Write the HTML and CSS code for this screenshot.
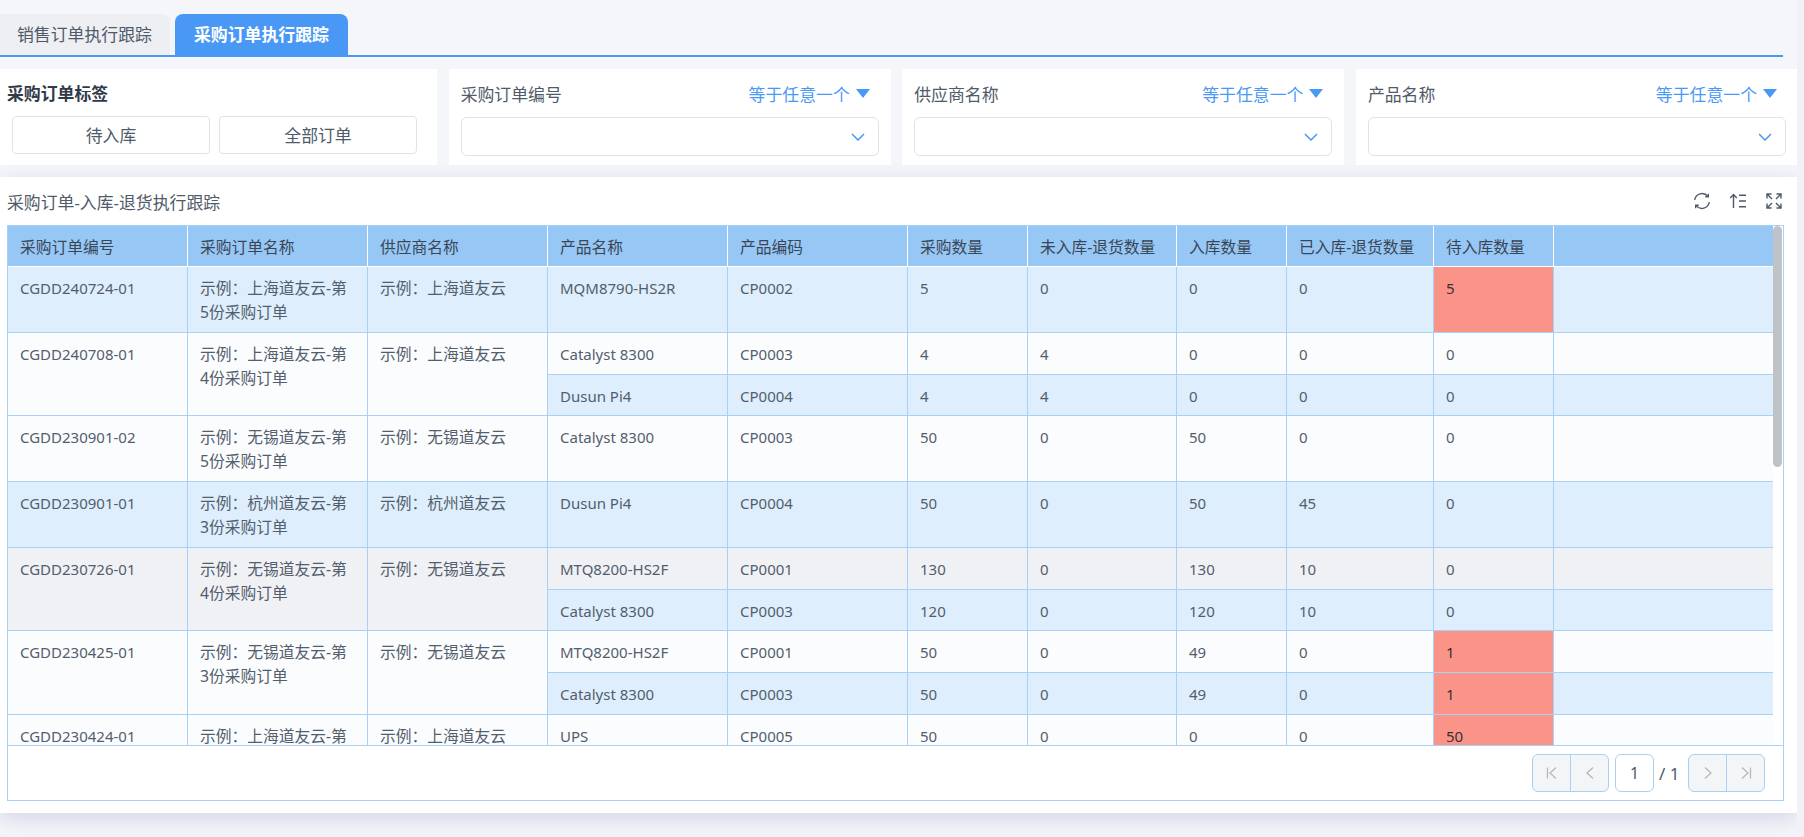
FILE: index.html
```html
<!DOCTYPE html>
<html lang="zh">
<head>
<meta charset="utf-8">
<title>采购订单执行跟踪</title>
<link rel="stylesheet" href="styles.css">
</head>
<body>
<div class="app">
  <div class="tabs">
    <div class="tab">销售订单执行跟踪</div>
    <div class="tab tab-active">采购订单执行跟踪</div>
  </div>

  <div class="filters">
    <div class="card">
      <div class="card-title">采购订单标签</div>
      <div class="tag-buttons">
        <div class="tag-button">待入库</div>
        <div class="tag-button">全部订单</div>
      </div>
    </div>
    <div class="card">
      <div class="card-head"><span>采购订单编号</span><span class="op">等于任意一个<svg class="caret" viewBox="0 0 14 9"><path d="M0 0h14L7 9z"/></svg></span></div>
      <div class="select"><svg class="chev" viewBox="0 0 14 8"><path d="M1 1l6 6 6-6"/></svg></div>
    </div>
    <div class="card">
      <div class="card-head"><span>供应商名称</span><span class="op">等于任意一个<svg class="caret" viewBox="0 0 14 9"><path d="M0 0h14L7 9z"/></svg></span></div>
      <div class="select"><svg class="chev" viewBox="0 0 14 8"><path d="M1 1l6 6 6-6"/></svg></div>
    </div>
    <div class="card">
      <div class="card-head"><span>产品名称</span><span class="op">等于任意一个<svg class="caret" viewBox="0 0 14 9"><path d="M0 0h14L7 9z"/></svg></span></div>
      <div class="select"><svg class="chev" viewBox="0 0 14 8"><path d="M1 1l6 6 6-6"/></svg></div>
    </div>
  </div>

  <div class="panel">
    <div class="panel-head">
      <div class="panel-title">采购订单-入库-退货执行跟踪</div>
      <div class="tools">
        <svg class="tool" viewBox="0 0 18 18"><path d="M1.700 8A7.400 7.400 0 0 1 14.800 4.400M16.300 10A7.400 7.400 0 0 1 3.200 13.600"/><path d="M15.300 1.800v3h-3M2.700 16.200v-3h3"/></svg>
        <svg class="tool" viewBox="0 0 18 18"><path d="M4.500 16V2.600M1.200 6l3.300-3.400L7.800 6M10 3.200h7M10 9h7M10 14.800h7"/></svg>
        <svg class="tool" viewBox="0 0 18 18"><path d="M6.500 2H2v4.500M2 2l5 5M11.500 2H16v4.500M16 2l-5 5M6.500 16H2v-4.500M2 16l5-5M11.500 16H16v-4.500M16 16l-5-5"/></svg>
      </div>
    </div>

    <div class="grid">
      <div class="grid-main">
        <div class="scroller">
          <table class="data">
            <colgroup>
              <col class="c180"><col class="c180"><col class="c180"><col class="c180"><col class="c180">
              <col class="c120"><col class="c149"><col class="c110"><col class="c147"><col class="c120"><col class="c221">
            </colgroup>
            <thead>
              <tr>
                <th>采购订单编号</th><th>采购订单名称</th><th>供应商名称</th><th>产品名称</th><th>产品编码</th>
                <th>采购数量</th><th>未入库-退货数量</th><th>入库数量</th><th>已入库-退货数量</th><th>待入库数量</th><th></th>
              </tr>
            </thead>
            <tbody>
              <tr class="blue h66">
                <td class="lat">CGDD240724-01</td><td>示例：上海道友云-第5份采购订单</td><td>示例：上海道友云</td>
                <td class="lat">MQM8790-HS2R</td><td class="lat">CP0002</td><td class="lat">5</td><td class="lat">0</td><td class="lat">0</td><td class="lat">0</td><td class="lat red">5</td><td></td>
              </tr>
              <tr class="white h42">
                <td class="lat" rowspan="2">CGDD240708-01</td><td rowspan="2">示例：上海道友云-第4份采购订单</td><td rowspan="2">示例：上海道友云</td>
                <td class="lat">Catalyst 8300</td><td class="lat">CP0003</td><td class="lat">4</td><td class="lat">4</td><td class="lat">0</td><td class="lat">0</td><td class="lat">0</td><td></td>
              </tr>
              <tr class="blue h41">
                <td class="lat">Dusun Pi4</td><td class="lat">CP0004</td><td class="lat">4</td><td class="lat">4</td><td class="lat">0</td><td class="lat">0</td><td class="lat">0</td><td></td>
              </tr>
              <tr class="white h66">
                <td class="lat">CGDD230901-02</td><td>示例：无锡道友云-第5份采购订单</td><td>示例：无锡道友云</td>
                <td class="lat">Catalyst 8300</td><td class="lat">CP0003</td><td class="lat">50</td><td class="lat">0</td><td class="lat">50</td><td class="lat">0</td><td class="lat">0</td><td></td>
              </tr>
              <tr class="blue h66">
                <td class="lat">CGDD230901-01</td><td>示例：杭州道友云-第3份采购订单</td><td>示例：杭州道友云</td>
                <td class="lat">Dusun Pi4</td><td class="lat">CP0004</td><td class="lat">50</td><td class="lat">0</td><td class="lat">50</td><td class="lat">45</td><td class="lat">0</td><td></td>
              </tr>
              <tr class="gray h42">
                <td class="lat" rowspan="2">CGDD230726-01</td><td rowspan="2">示例：无锡道友云-第4份采购订单</td><td rowspan="2">示例：无锡道友云</td>
                <td class="lat">MTQ8200-HS2F</td><td class="lat">CP0001</td><td class="lat">130</td><td class="lat">0</td><td class="lat">130</td><td class="lat">10</td><td class="lat">0</td><td></td>
              </tr>
              <tr class="blue h41">
                <td class="lat">Catalyst 8300</td><td class="lat">CP0003</td><td class="lat">120</td><td class="lat">0</td><td class="lat">120</td><td class="lat">10</td><td class="lat">0</td><td></td>
              </tr>
              <tr class="white h42">
                <td class="lat" rowspan="2">CGDD230425-01</td><td rowspan="2">示例：无锡道友云-第3份采购订单</td><td rowspan="2">示例：无锡道友云</td>
                <td class="lat">MTQ8200-HS2F</td><td class="lat">CP0001</td><td class="lat">50</td><td class="lat">0</td><td class="lat">49</td><td class="lat">0</td><td class="lat red">1</td><td></td>
              </tr>
              <tr class="blue h42">
                <td class="lat">Catalyst 8300</td><td class="lat">CP0003</td><td class="lat">50</td><td class="lat">0</td><td class="lat">49</td><td class="lat">0</td><td class="lat red">1</td><td></td>
              </tr>
              <tr class="white h66">
                <td class="lat">CGDD230424-01</td><td>示例：上海道友云-第2份采购订单</td><td>示例：上海道友云</td>
                <td class="lat">UPS</td><td class="lat">CP0005</td><td class="lat">50</td><td class="lat">0</td><td class="lat">0</td><td class="lat">0</td><td class="lat red">50</td><td></td>
              </tr>
            </tbody>
          </table>
        </div>
        <div class="scrollbar"><div class="thumb"></div></div>
      </div>
      <div class="pager">
        <div class="pg-group">
          <div class="pg-btn pg-first"><svg class="pg-icon" viewBox="0 0 16 16"><path d="M3.500 2.500v11M12 2.500L6 8l6 5.500"/></svg></div>
          <div class="pg-btn"><svg class="pg-icon" viewBox="0 0 16 16"><path d="M11 2.500L5 8l6 5.500"/></svg></div>
        </div>
        <div class="pg-input">1</div>
        <div class="pg-total">/ 1</div>
        <div class="pg-group">
          <div class="pg-btn pg-first"><svg class="pg-icon" viewBox="0 0 16 16"><path d="M5 2.500L11 8l-6 5.500"/></svg></div>
          <div class="pg-btn"><svg class="pg-icon" viewBox="0 0 16 16"><path d="M4 2.500L10 8l-6 5.500M12.500 2.500v11"/></svg></div>
        </div>
      </div>
    </div>
  </div>
</div>
</body>
</html>
```

FILE: styles.css
```css
* { box-sizing: border-box; }

html, body {
  margin: 0;
  height: 100%;
  overflow: hidden;
}

body {
  background: #f1f2f8;
  color: #4a5565;
  font-family: "Noto Sans", "Noto Sans CJK SC", sans-serif;
  font-size: 15.75px;
}

.app {
  width: 1797px;
  height: 834px;
  padding-top: 14px;
  background: #f4f6fa;
  overflow: hidden;
}

/* Tabs */
.tabs {
  display: flex;
  gap: 5px;
  width: 1783px;
  height: 43px;
  border-bottom: 2px solid #4a98f5;
}

.tab {
  width: 170px;
  height: 41px;
  padding-left: 17px;
  line-height: 42px;
  font-size: 16.875px;
  color: #4f5a68;
  background: #eeeff3;
  border-radius: 0 8px 0 0;
}

.tab-active {
  width: 173px;
  padding-left: 19px;
  color: #fff;
  font-weight: 700;
  background: #4a98f5;
  border-radius: 8px 8px 0 0;
}

/* Filter cards */
.filters {
  display: flex;
  gap: 11.5px;
  width: 1803px;
  height: 96px;
  margin: 12px 0 12px -5px;
}

.card {
  flex: 1;
  min-width: 0;
  padding: 13px 12px 0;
  background: #fff;
}

.card-title {
  height: 24px;
  line-height: 24px;
  font-size: 16.875px;
  font-weight: 700;
  color: #303a48;
}

.tag-buttons {
  display: flex;
  gap: 9px;
  margin: 10px 0 0 5px;
}

.tag-button {
  width: 198px;
  height: 38px;
  line-height: 38px;
  text-align: center;
  font-size: 16.875px;
  color: #505a69;
  background: #fff;
  border: 1px solid #e0e2e6;
  border-radius: 4px;
}

.card-head {
  display: flex;
  justify-content: space-between;
  align-items: center;
  height: 24px;
  padding-bottom: 2px;
  font-size: 16.875px;
  color: #505a69;
}

.op {
  display: flex;
  align-items: center;
  gap: 6px;
  padding-right: 9px;
  color: #4a98f5;
}

.caret {
  width: 14px;
  height: 9px;
  fill: #4a98f5;
}

.select {
  display: flex;
  align-items: center;
  justify-content: flex-end;
  height: 39px;
  margin-top: 11px;
  padding-right: 13px;
  background: #fff;
  border: 1px solid #e0e2e6;
  border-radius: 6px;
}

.chev {
  width: 14px;
  height: 8px;
  fill: none;
  stroke: #4a98f5;
  stroke-width: 1.5;
}

/* Main panel */
.panel {
  height: 636px;
  padding: 0 13px 0 7px;
  background: #fff;
  box-shadow: 0 6px 20px rgba(90, 80, 150, 0.2);
}

.panel-head {
  display: flex;
  justify-content: space-between;
  align-items: center;
  height: 48px;
}

.panel-title {
  font-size: 16.875px;
  color: #505a69;
}

.tools {
  display: flex;
  gap: 18px;
  padding-right: 1px;
}

.tool {
  width: 18px;
  height: 18px;
  fill: none;
  stroke: #4f5a68;
  stroke-width: 1.4;
}

/* Table */
.grid {
  height: 576px;
  border: 1px solid #a8d1f7;
}

.grid-main {
  display: flex;
  height: 519px;
}

.scroller {
  width: 1766px;
  overflow: hidden;
}

.scrollbar {
  width: 10px;
  padding-right: 1px;
}

.thumb {
  height: 241px;
  background: #bfc2c7;
  border-radius: 5px;
}

.data {
  width: 1766px;
  table-layout: fixed;
  border-collapse: separate;
  border-spacing: 0;
}

.c180 { width: 180px; }
.c120 { width: 120px; }
.c149 { width: 149px; }
.c110 { width: 110px; }
.c147 { width: 147px; }
.c221 { width: 221px; }

th, td {
  padding: 9px 12px 0;
  vertical-align: top;
  text-align: left;
  font-weight: 400;
  line-height: 24px;
  color: #535e6d;
  border-right: 1px solid #a8d1f7;
  border-bottom: 1px solid #a8d1f7;
}

th {
  height: 41px;
  color: #3a4658;
  background: #97c8f5;
  border-color: #fff;
}

th:last-child, td:last-child { border-right: 0; }

.lat { font-size: 15px; }

.h66 { height: 66px; }
.h42 { height: 42px; }
.h41 { height: 41px; }

.white > td { background: #fbfcfe; }
.blue > td { background: #deeefc; }
.gray > td { background: #f0f1f5; }
.white > td.red, .blue > td.red { background: #fb9488; color: #3a3030; }

/* Pager */
.pager {
  display: flex;
  align-items: center;
  justify-content: flex-end;
  height: 55px;
  padding-right: 18px;
  border-top: 1px solid #a8d1f7;
}

.pg-group {
  display: flex;
  height: 38px;
  background: #f4f5f7;
  border: 1px solid #a8d1f7;
  border-radius: 6px;
}

.pg-btn {
  display: flex;
  align-items: center;
  justify-content: center;
  width: 37px;
}

.pg-first { width: 38px; border-right: 1px solid #a8d1f7; }

.pg-icon {
  width: 16px;
  height: 16px;
  fill: none;
  stroke: #b5b8bd;
  stroke-width: 1.3;
}

.pg-input {
  width: 39px;
  height: 38px;
  margin-left: 6px;
  line-height: 36px;
  text-align: center;
  color: #505a69;
  border: 1px solid #a8d1f7;
  border-radius: 6px;
}

.pg-total {
  width: 34px;
  padding-left: 5px;
  font-size: 17px;
  color: #505a69;
}
```
